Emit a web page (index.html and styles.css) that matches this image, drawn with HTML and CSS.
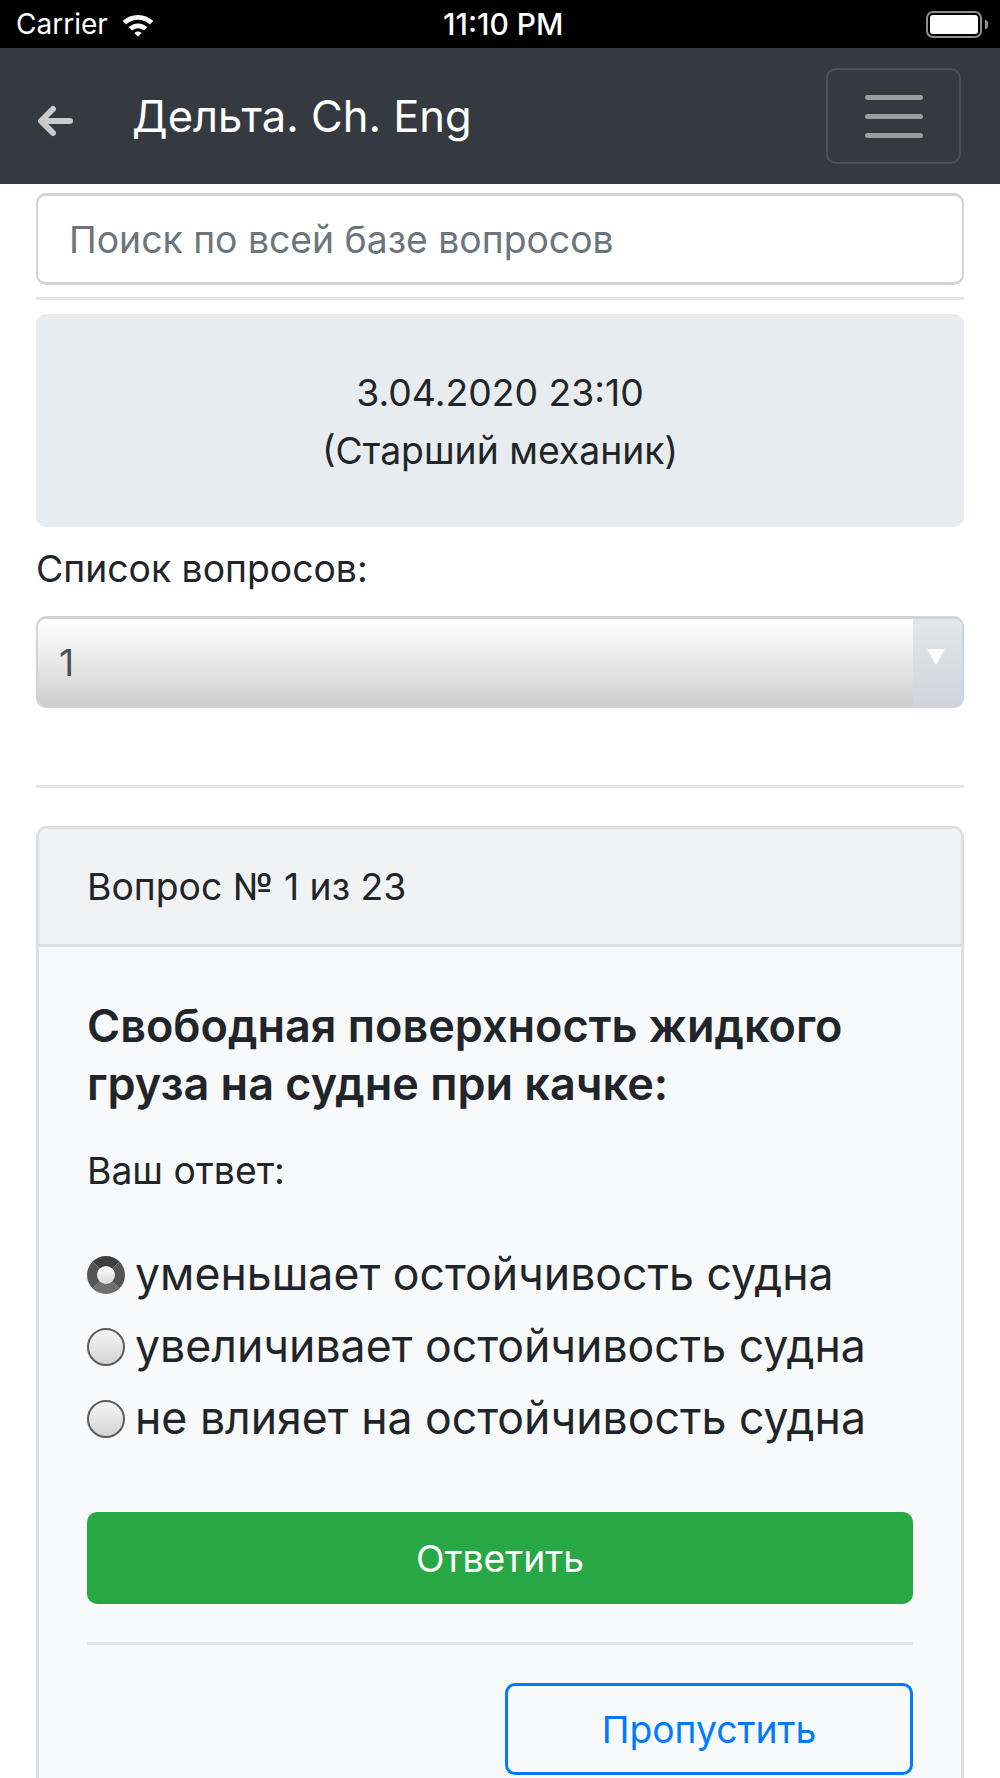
FILE: index.html
```html
<!DOCTYPE html>
<html lang="ru">
<head>
    <meta charset="UTF-8">
    <meta name="viewport" content="width=device-width, initial-scale=1.0">
    <title>Дельта. Ch. Eng</title>
    <link rel="stylesheet" href="styles.css">
</head>
<body>
    <div class="status-bar">
        <div class="status-left">
            <span>Carrier</span>
            <svg class="wifi-icon" width="36" height="27" viewBox="0 0 32 24">
                <path d="M16 3.500c5.300 0 10 2 13.600 5.400l-3 3.100C23.800 9.300 20.100 7.800 16 7.800S8.200 9.300 5.400 12l-3-3.100C6 5.500 10.700 3.500 16 3.500z" fill="#fff"/>
                <path d="M16 11c3.200 0 6.100 1.200 8.300 3.300l-3 3.100c-1.400-1.300-3.300-2.100-5.300-2.100s-3.900.8-5.300 2.100l-3-3.100C9.900 12.200 12.800 11 16 11z" fill="#fff"/>
                <path d="M16 18.200c1.300 0 2.400.5 3.200 1.300L16 22.800l-3.200-3.300c.8-.8 1.900-1.300 3.200-1.300z" fill="#fff"/>
            </svg>
        </div>
        <div class="status-time">11:10 PM</div>
        <div class="battery">
            <div class="battery-body"><div class="battery-level"></div></div>
            <div class="battery-cap"></div>
        </div>
    </div>

    <nav class="navbar">
        <svg class="back-icon" width="36" height="34" viewBox="0 0 36 34">
            <path d="M33 17H6M16 5L4 17l12 12" fill="none" stroke="#c9cacb" stroke-width="6" stroke-linecap="round" stroke-linejoin="round"/>
        </svg>
        <div class="navbar-title">Дельта. Ch. Eng</div>
        <button class="menu-btn">
            <span class="menu-line"></span>
            <span class="menu-line"></span>
            <span class="menu-line"></span>
        </button>
    </nav>

    <div class="content">
        <input class="search-input" type="text" placeholder="Поиск по всей базе вопросов">
        <hr class="divider search-divider">

        <div class="jumbotron">
            <div>3.04.2020 23:10</div>
            <div>(Старший механик)</div>
        </div>

        <label class="list-label">Список вопросов:</label>
        <div class="fake-select">
            <span class="fake-select-value">1</span>
            <span class="fake-select-arrow"><span class="arrow-down"></span></span>
        </div>
        <hr class="divider select-divider">

        <div class="card">
            <div class="card-header">Вопрос № 1 из 23</div>
            <div class="card-body">
                <h4 class="question">Свободная поверхность жидкого груза на судне при качке:</h4>
                <p class="answer-label">Ваш ответ:</p>

                <div class="answer-list">
                    <label class="answer-item"><input type="radio" name="answer" checked>уменьшает остойчивость судна</label>
                    <label class="answer-item"><input type="radio" name="answer">увеличивает остойчивость судна</label>
                    <label class="answer-item"><input type="radio" name="answer">не влияет на остойчивость судна</label>
                </div>

                <button class="btn-answer">Ответить</button>
                <hr class="divider card-divider">
                <div class="skip-row">
                    <button class="btn-skip">Пропустить</button>
                </div>
            </div>
        </div>
    </div>
</body>
</html>
```

FILE: styles.css
```css
html, body {
    margin: 0;
    padding: 0;
    height: 1778px;
    overflow: hidden;
}

body {
    font-family: Inter, "Noto Sans", sans-serif;
    font-size: 37.3px;
    color: #212529;
    background-color: #ffffff;
}

.status-bar {
    height: 48px;
    background-color: #000;
    color: #fff;
    display: flex;
    align-items: center;
    justify-content: space-between;
    padding: 0 12px 0 16px;
    font-size: 28px;
    box-sizing: border-box;
    position: relative;
}

.status-left {
    display: flex;
    align-items: center;
    gap: 12px;
}

.status-time {
    font-size: 30px;
    font-weight: 500;
    position: absolute;
    left: 443px;
}

.battery {
    display: flex;
    align-items: center;
    gap: 3px;
}

.battery-body {
    width: 56px;
    height: 27px;
    box-sizing: border-box;
    border: 2px solid #8e8e8e;
    border-radius: 7px;
    padding: 2px;
}

.battery-level {
    height: 100%;
    background-color: #fff;
    border-radius: 3px;
}

.battery-cap {
    width: 3px;
    height: 9px;
    background-color: #8e8e8e;
    border-radius: 0 3px 3px 0;
}

.navbar {
    height: 136px;
    box-sizing: border-box;
    background-color: #343a40;
    display: flex;
    align-items: center;
    padding: 0 39px 0 37px;
}

.back-icon {
    margin-top: 10px;
    margin-right: 59px;
}

.navbar-title {
    color: #fff;
    font-size: 43.5px;
    flex: 1;
}

.menu-btn {
    width: 135px;
    height: 96px;
    background: none;
    border: 2px solid #4b5157;
    border-radius: 10px;
    display: flex;
    flex-direction: column;
    align-items: center;
    justify-content: center;
    gap: 14px;
    padding: 0;
}

.menu-line {
    width: 58px;
    height: 5px;
    border-radius: 3px;
    background-color: #9a9da0;
}

.content {
    padding: 9px 36px 0;
}

.search-input {
    display: block;
    width: 100%;
    height: 92px;
    box-sizing: border-box;
    border: 2px solid #ced4da;
    border-top-width: 3px;
    border-bottom-width: 3px;
    border-radius: 10px;
    padding: 0 31px;
    font-family: inherit;
    font-size: 37.3px;
    color: #495057;
    background-color: #fff;
}

.search-input::placeholder {
    color: #6c757d;
    opacity: 1;
}

.divider {
    border: none;
    border-top: 3px solid #e4e5e7;
    margin: 0;
}

.search-divider {
    margin-top: 12px;
}

.jumbotron {
    margin-top: 14px;
    height: 213px;
    box-sizing: border-box;
    background-color: #e9ecef;
    border-radius: 10px;
    display: flex;
    flex-direction: column;
    align-items: center;
    padding-top: 50px;
    line-height: 58px;
}

.list-label {
    display: block;
    margin-top: 20px;
    line-height: 44px;
}

.fake-select {
    margin-top: 25px;
    height: 92px;
    box-sizing: border-box;
    border: 2px solid #ced4da;
    border-top-width: 3px;
    border-radius: 10px;
    display: flex;
    overflow: hidden;
    background: linear-gradient(#ffffff, #e8e8e8 50%, #cdcdcd);
}

.fake-select-value {
    flex: 1;
    padding-left: 21px;
    line-height: 87px;
    color: #495057;
}

.fake-select-arrow {
    width: 49px;
    background: linear-gradient(#e3e6e9, #d0d5dd);
    display: flex;
    justify-content: center;
    padding: 30px 4px 0 0;
    box-sizing: border-box;
}

.arrow-down {
    width: 0;
    height: 0;
    border-left: 9px solid transparent;
    border-right: 9px solid transparent;
    border-top: 16px solid #fff;
}

.select-divider {
    margin-top: 77px;
}

.card {
    margin-top: 38px;
    padding-bottom: 40px;
    border: 3px solid #dddfe1;
    border-radius: 10px;
    background-color: #f8f9fb;
}

.card-header {
    height: 118px;
    box-sizing: border-box;
    background-color: #f1f2f4;
    border-bottom: 3px solid #dddfe1;
    border-radius: 7px 7px 0 0;
    padding: 0 48px;
    display: flex;
    align-items: center;
}

.card-body {
    padding: 50px 48px 0;
}

.question {
    margin: 0;
    font-size: 45px;
    font-weight: 600;
    line-height: 58px;
}

.answer-label {
    margin: 36px 0 0;
    line-height: 44px;
}

.answer-list {
    margin-top: 45px;
}

.answer-item {
    display: flex;
    align-items: center;
    height: 72px;
    font-size: 44.6px;
}

.answer-item input {
    appearance: none;
    -webkit-appearance: none;
    width: 38px;
    height: 38px;
    margin: 2px 10px 0 0;
    box-sizing: border-box;
    border: 2px solid #5d5d5d;
    border-radius: 50%;
    background: linear-gradient(#f6f6f6, #d2d2d2);
    flex-shrink: 0;
}

.answer-item input:checked {
    border: 10px solid #555;
    border-top-color: #3e3e3e;
    border-bottom-color: #6e6e6e;
    background: linear-gradient(#ffffff, #d8d8d8);
}

.btn-answer {
    display: block;
    width: 100%;
    height: 92px;
    margin-top: 58px;
    border: none;
    border-radius: 10px;
    background-color: #28a745;
    color: #fff;
    font-family: inherit;
    font-size: 37.3px;
}

.card-divider {
    margin-top: 38px;
}

.skip-row {
    margin-top: 38px;
    display: flex;
    justify-content: flex-end;
}

.btn-skip {
    width: 408px;
    height: 92px;
    background: none;
    border: 3px solid #007bff;
    border-radius: 10px;
    color: #007bff;
    font-family: inherit;
    font-size: 37.3px;
}
```
